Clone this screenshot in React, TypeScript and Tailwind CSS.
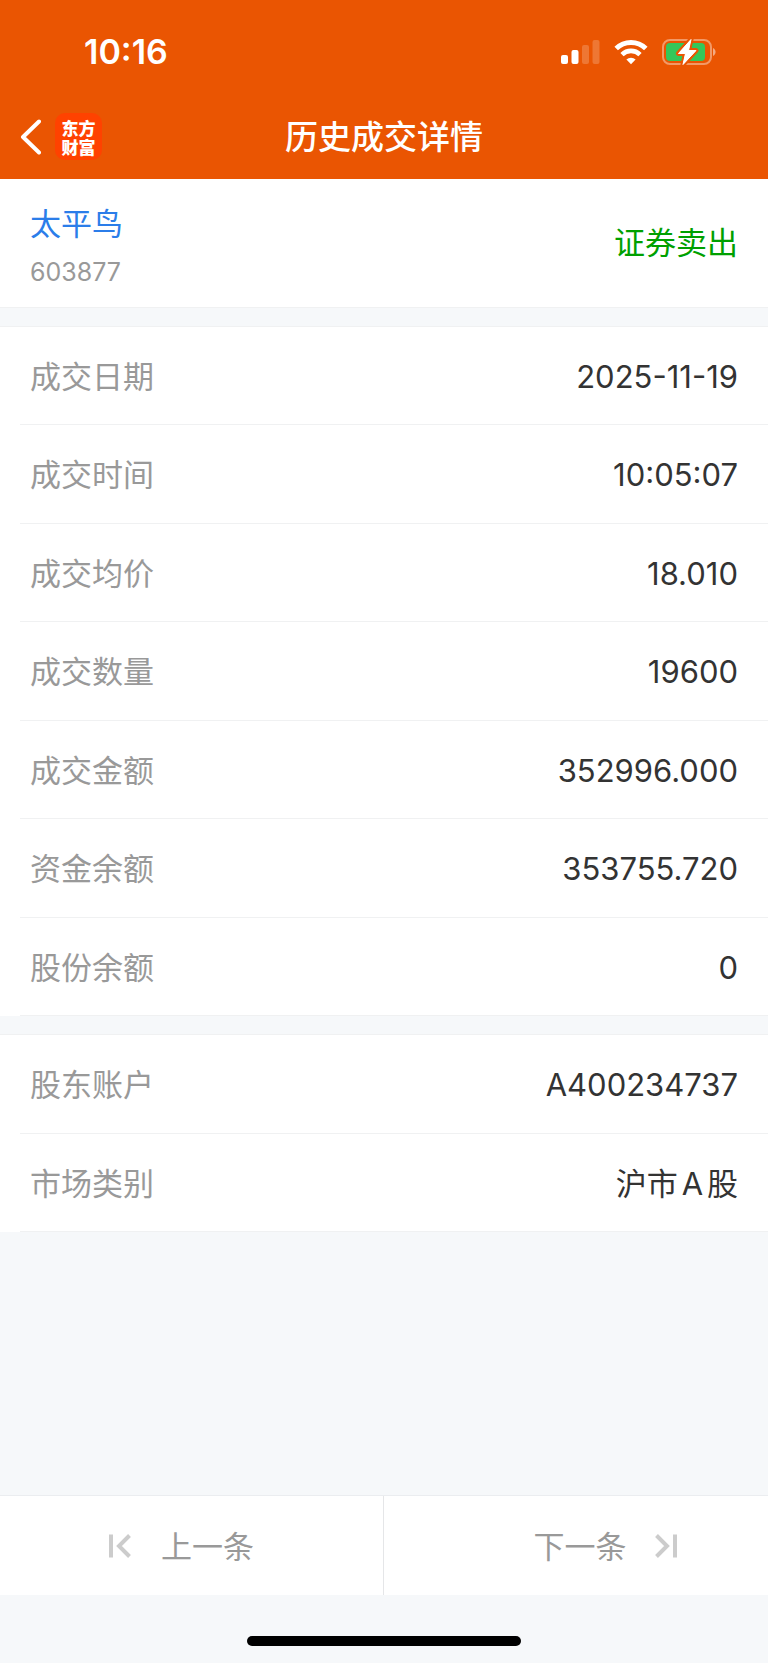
import { useState } from 'react';

type Field = { label: string; value: string };

const tradeFields: Field[] = [
  { label: '成交日期', value: '2025-11-19' },
  { label: '成交时间', value: '10:05:07' },
  { label: '成交均价', value: '18.010' },
  { label: '成交数量', value: '19600' },
  { label: '成交金额', value: '352996.000' },
  { label: '资金余额', value: '353755.720' },
  { label: '股份余额', value: '0' },
];

const accountFields: Field[] = [
  { label: '股东账户', value: 'A400234737' },
  { label: '市场类别', value: '沪市A股' },
];

function StatusIcons() {
  return (
    <div className="flex items-center gap-[14px]">
      {/* Signal */}
      <svg width="39" height="26" viewBox="0 0 39 26" fill="#fff" aria-hidden="true">
        <rect x="0" y="16" width="7" height="9" rx="2" />
        <rect x="10.5" y="11" width="7" height="14" rx="2" />
        <rect x="21" y="6" width="7" height="19" rx="2" opacity=".2" />
        <rect x="31.5" y="1" width="7" height="24" rx="2" opacity=".2" />
      </svg>
      {/* Wi-Fi */}
      <svg width="34" height="26" viewBox="0 0 34 26" fill="none" stroke="#fff" strokeWidth="5" aria-hidden="true">
        <path d="M2.2 9.6a21 21 0 0 1 29.6 0" />
        <path d="M8 15.6a12.8 12.8 0 0 1 18 0" strokeWidth="4.6" />
        <path d="M17 25.2l-4.6-4.7a6.6 6.6 0 0 1 9.2 0z" fill="#fff" stroke="none" />
      </svg>
      {/* Battery */}
      <svg width="54" height="28" viewBox="0 0 54 28" aria-hidden="true">
        <rect x="1" y="2" width="48" height="24" rx="7" fill="none" stroke="#fff" strokeOpacity=".4" strokeWidth="2" />
        <path d="M51 10c3.400 1.500 3.400 6.500 0 8z" fill="#fff" fillOpacity=".5" />
        <rect x="4" y="5" width="39" height="18" rx="4" fill="#34c759" />
        <path
          d="M29 1.500 16.500 15.500h7l-2.500 11L34 12.500h-7.500z"
          fill="#fff"
          stroke="#ea5502"
          strokeWidth="5"
          strokeLinejoin="round"
          paintOrder="stroke"
        />
        <path d="M29 1.500 16.500 15.500h7l-2.500 11L34 12.500h-7.500z" fill="#fff" stroke="#fff" strokeLinejoin="round" />
      </svg>
    </div>
  );
}

function FieldList({ fields, className }: { fields: Field[]; className: string }) {
  return (
    <dl className={`grid auto-rows-fr bg-white pl-5 ${className}`}>
      {fields.map((field) => (
        <div
          key={field.label}
          className="flex items-center justify-between border-b border-[#f0f1f2] pt-[3px] pl-[10px] pr-[30px]"
        >
          <dt className="text-[31px] text-[#999]">{field.label}</dt>
          <dd className="text-[31px] text-[#333] [text-autospace:normal]">{field.value}</dd>
        </div>
      ))}
    </dl>
  );
}

export default function App() {
  const [offset, setOffset] = useState(0);

  return (
    <div className="flex min-h-screen flex-col bg-[#f6f8fa] font-['Inter','Noto_Sans_CJK_SC',sans-serif] leading-normal">
      <header className="bg-[#ea5502] text-white">
        <div className="flex h-[100px] items-center justify-between pt-[3px] pl-[84px] pr-[52px]">
          <time className="text-[34px] font-semibold">10:16</time>
          <StatusIcons />
        </div>
        <div className="grid h-[79px] grid-cols-[1fr_auto_1fr] items-center pb-[6px]">
          <div className="flex items-center gap-[14px] pl-5">
            <button type="button" aria-label="返回">
              <svg width="21" height="36" viewBox="0 0 21 36" fill="none" aria-hidden="true">
                <path d="M19 2.500 3 18l16 15.500" stroke="#fff" strokeWidth="4" strokeLinecap="round" strokeLinejoin="round" />
              </svg>
            </button>
            <a
              href="#home"
              className="flex h-[47px] w-[47px] items-center justify-center rounded-[10px] bg-[#ff4200] font-['Noto_Sans_CJK_SC',sans-serif] text-[17px] font-black leading-[19px]"
            >
              <span className="w-[34px]">东方财富</span>
            </a>
          </div>
          <h1 className="pt-[2px] text-[33px] font-medium">历史成交详情</h1>
        </div>
      </header>

      <main className="flex flex-1 flex-col">
        <section className="flex h-[129px] items-center justify-between border-b border-[#f0f1f2] bg-white px-[30px]">
          <div className="flex flex-col gap-2 pt-[9px]">
            <a href="#stock" className="text-[31px] leading-10 text-[#2b7de9]">
              太平鸟
            </a>
            <span className="text-[25px] leading-10 text-[#999]">603877</span>
          </div>
          <span className="text-[31px] text-[#00a000]">证券卖出</span>
        </section>

        <FieldList fields={tradeFields} className="mt-[18px] min-h-[690px] border-t border-[#f0f1f2]" />
        <FieldList fields={accountFields} className="mt-[18px] min-h-[198px] border-t border-[#f0f1f2]" />
      </main>

      <footer>
        <nav className="grid h-[100px] grid-cols-2 border-t border-[#ebedf0] bg-white text-[31px] text-[#999]">
          <button
            type="button"
            onClick={() => setOffset(offset - 1)}
            className="flex items-center justify-center gap-[30px] border-r border-[#e5e6e8] pr-5"
          >
            <svg width="22" height="24" viewBox="0 0 22 24" fill="none" stroke="#ccc" strokeWidth="4" aria-hidden="true">
              <path d="M2 .5v23M20.500 1.500 10 12l10.500 10.500" />
            </svg>
            <span className="pt-[3px]">上一条</span>
          </button>
          <button
            type="button"
            onClick={() => setOffset(offset + 1)}
            className="flex items-center justify-center gap-[28px] pl-[58px]"
          >
            <span className="pt-[3px]">下一条</span>
            <svg width="22" height="24" viewBox="0 0 22 24" fill="none" stroke="#ccc" strokeWidth="4" aria-hidden="true">
              <path d="M20 .5v23M1.500 1.500 12 12 1.500 22.500" />
            </svg>
          </button>
        </nav>
        <div className="flex h-[68px] items-end justify-center pb-[17px]">
          <div className="h-[10px] w-[274px] rounded-full bg-black" />
        </div>
      </footer>
    </div>
  );
}
